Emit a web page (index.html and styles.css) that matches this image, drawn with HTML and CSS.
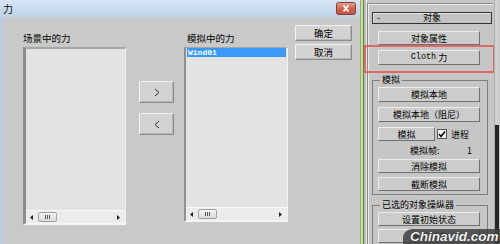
FILE: index.html
```html
<!DOCTYPE html>
<html>
<head>
<meta charset="utf-8">
<link rel="stylesheet" href="styles.css">
</head>
<body>
<div class="screen">
  <div class="dialog">
    <div class="titlebar">
      <span class="title">力</span>
      <svg class="close" width="20" height="13" viewBox="0 0 20 13">
        <defs><linearGradient id="cg" x1="0" y1="0" x2="0" y2="1"><stop offset="0" stop-color="#e9a597"/><stop offset="0.5" stop-color="#d2614f"/><stop offset="1" stop-color="#c6503c"/></linearGradient></defs>
        <rect x="0.5" y="0.5" width="19" height="12" rx="2" fill="url(#cg)" stroke="#8d3b30"/>
        <path d="M7.5 3.5 L12.5 9.5 M12.5 3.5 L7.5 9.5" stroke="#fff" stroke-width="1.8"/>
      </svg>
    </div>
    <div class="dbody">
      <div class="col col-left">
        <div class="label">场景中的力</div>
        <div class="list list-a">
          <div class="items"></div>
          <div class="hscroll">
            <svg class="arr" width="3" height="5" viewBox="0 0 3 5"><path d="M3 0 L0 2.5 L3 5Z" fill="#222"/></svg>
            <div class="thumb"><span></span><span></span><span></span></div>
            <div class="fill"></div>
            <svg class="arr" width="3" height="5" viewBox="0 0 3 5"><path d="M0 0 L3 2.5 L0 5Z" fill="#222"/></svg>
          </div>
        </div>
      </div>
      <div class="col col-mid">
        <button class="btn mv"><svg width="6" height="9" viewBox="0 0 6 9"><path d="M1 1 L5 4.5 L1 8" fill="none" stroke="#333" stroke-width="1"/></svg></button>
        <button class="btn mv"><svg width="6" height="9" viewBox="0 0 6 9"><path d="M5 1 L1 4.5 L5 8" fill="none" stroke="#333" stroke-width="1"/></svg></button>
      </div>
      <div class="col col-right">
        <div class="label lbl-r">模拟中的力</div>
        <div class="list list-b">
          <div class="items">
            <div class="item sel">Wind01</div>
          </div>
          <div class="hscroll">
            <svg class="arr" width="3" height="5" viewBox="0 0 3 5"><path d="M3 0 L0 2.5 L3 5Z" fill="#222"/></svg>
            <div class="thumb"><span></span><span></span><span></span></div>
            <div class="fill"></div>
            <svg class="arr" width="3" height="5" viewBox="0 0 3 5"><path d="M0 0 L3 2.5 L0 5Z" fill="#222"/></svg>
          </div>
        </div>
      </div>
      <div class="col col-btns">
        <button class="btn db">确定</button>
        <button class="btn db">取消</button>
      </div>
    </div>
  </div>
  <div class="sep"></div>
  <div class="panel">
    <div class="pcontent">
      <div class="rollout">
        <div class="rhead"><span class="minus">-</span><span class="rtitle">对象</span><span></span></div>
        <button class="pbtn first">对象属性</button>
        <div class="hilite">
          <button class="pbtn"><span class="mono">Cloth</span>&nbsp;力</button>
        </div>
        <fieldset class="grp g1">
          <legend>模拟</legend>
          <button class="pbtn">模拟本地</button>
          <button class="pbtn">模拟本地（阻尼）</button>
          <div class="simrow">
            <button class="pbtn half">模拟</button>
            <svg class="chk" width="10" height="10" viewBox="0 0 10 10"><rect x="0.5" y="0.5" width="9" height="9" fill="#f2f2f2" stroke="#555"/><path d="M2 5 L4 7.5 L8 2.5" fill="none" stroke="#000" stroke-width="1.5"/></svg>
            <span class="ptxt">进程</span>
          </div>
          <div class="framerow"><span>模拟帧:</span><span>1</span></div>
          <button class="pbtn s14">消除模拟</button>
          <button class="pbtn s14">截断模拟</button>
        </fieldset>
        <fieldset class="grp g2">
          <legend>已选的对象操纵器</legend>
          <button class="pbtn s14">设置初始状态</button>
          <button class="pbtn s14">重设状态</button>
        </fieldset>
      </div>
    </div>
    <div class="ptrack"><div class="pthumb"></div></div>
  </div>
  <div class="wm">Chinavid.com</div>
</div>
</body>
</html>
```
FILE: styles.css
```css
html, body {
  margin: 0;
  padding: 0;
}
body {
  width: 500px;
  height: 244px;
  overflow: hidden;
  font-family: "Noto Sans CJK SC", "Noto Sans", sans-serif;
  color: #000;
}
.screen {
  position: relative;
  display: flex;
  width: 500px;
  height: 244px;
  overflow: hidden;
  background: #c6c6c6;
}
.dialog {
  width: 361px;
  flex: none;
  display: flex;
  flex-direction: column;
  background: #c9c9c9;
  border-right: 1px solid #86a6c4;
  box-sizing: border-box;
}
.titlebar {
  height: 17px;
  flex: none;
  display: flex;
  align-items: center;
  padding-left: 3px;
  background: linear-gradient(#d6e5f4, #bcd3ea);
}
.title {
  font-size: 10px;
  line-height: 12px;
  color: #0d0d0d;
}
.close {
  display: block;
  margin-left: auto;
  margin-right: 4px;
}
.dbody {
  flex: 1;
  display: flex;
  border-left: 3px solid #b9cde3;
  padding-left: 20px;
}
.col {
  display: flex;
  flex-direction: column;
}
.col-left {
  width: 103px;
  padding-top: 15px;
}
.label {
  font-size: 9.5px;
  line-height: 13px;
  height: 13px;
  white-space: nowrap;
}
.lbl-r {
  padding-left: 3px;
}
.list {
  margin-top: 2px;
  display: flex;
  flex-direction: column;
  background: #e3e3e3;
  box-sizing: border-box;
}
.list-a {
  height: 178px;
  border-top: 2px solid #a6a6a6;
  border-left: 3px solid #8c8c8c;
  border-right: 1px solid #f2f2f2;
  border-bottom: 2px solid #f6f6f6;
}
.list-b {
  height: 175px;
  border-top: 1px solid #a6a6a6;
  border-left: 2px solid #909090;
  border-right: 1px solid #f2f2f2;
  border-bottom: 2px solid #f6f6f6;
}
.items {
  flex: 1;
}
.item {
  height: 9px;
  line-height: 9px;
  font-family: "Liberation Mono", monospace;
  font-size: 8px;
  font-weight: bold;
  padding-left: 1px;
}
.sel {
  background: #3b9af7;
  color: #fff;
  margin: 0 1px;
}
.hscroll {
  height: 12px;
  display: flex;
  align-items: center;
  background: #ececec;
  border-top: 1px solid #fafafa;
  padding: 0 5px 0 4px;
}
.arr {
  display: block;
  flex: none;
}
.thumb {
  width: 19px;
  height: 10px;
  margin-left: 5px;
  box-sizing: border-box;
  border: 1px solid #a2a2a2;
  border-radius: 2px;
  background: linear-gradient(#f6f6f6, #d9d9d9);
  display: flex;
  justify-content: center;
  align-items: center;
  gap: 1px;
}
.thumb span {
  width: 1px;
  height: 4px;
  background: #555;
}
.fill {
  flex: 1;
}
.col-mid {
  width: 35px;
  margin-left: 13px;
  padding-top: 64px;
  gap: 10px;
}
.col-right {
  width: 104px;
  margin-left: 10px;
  padding-top: 15px;
}
.col-btns {
  width: 57px;
  margin-left: 7px;
  padding-top: 8px;
  gap: 3px;
}
.btn {
  padding: 0;
  margin: 0;
  font-family: "Noto Sans CJK SC", sans-serif;
  font-size: 9.5px;
  color: #000;
  background: #d3d3d3;
  border: 1px solid;
  border-color: #f3f3f3 #8c8c8c #8c8c8c #f3f3f3;
  box-shadow: inset -1px -1px 0 #b6b6b6;
  display: flex;
  align-items: center;
  justify-content: center;
  box-sizing: border-box;
}
.mv {
  height: 22px;
}
.db {
  height: 16px;
}
.sep {
  width: 5px;
  flex: none;
  background: linear-gradient(to right, #dfe24c 0, #dfe24c 2px, #3f8583 2px, #3f8583 3px, #bdbdbd 3px);
}
.panel {
  width: 134px;
  flex: none;
  display: flex;
  background: #c6c6c6;
  border-left: 1px solid #e4e4e4;
  box-sizing: border-box;
}
.pcontent {
  width: 126px;
  flex: none;
  padding-top: 3px;
}
.rollout {
  height: 100%;
  box-sizing: border-box;
  border-top: 1px solid #8a8a8a;
  border-left: 1px solid #8a8a8a;
  box-shadow: inset 1px 1px 0 #ebebeb;
  padding: 8px 0 0 4px;
  display: flex;
  flex-direction: column;
}
.rhead {
  width: 120px;
  height: 12px;
  box-sizing: border-box;
  border: 1px solid #333;
  box-shadow: inset 1px 1px 0 #e6e6e6;
  background: #c3c3c3;
  display: grid;
  grid-template-columns: 1fr auto 1fr;
  align-items: center;
  font-size: 9px;
  line-height: 10px;
}
.minus {
  padding-left: 4px;
}
.pbtn {
  width: 102px;
  height: 15px;
  padding: 0;
  margin: 0;
  flex: none;
  font-family: "Noto Sans CJK SC", sans-serif;
  font-size: 9px;
  line-height: 11px;
  color: #000;
  background: #cccccc;
  border: 1px solid;
  border-color: #ececec #6f6f6f #6f6f6f #ececec;
  box-sizing: border-box;
  display: flex;
  align-items: center;
  justify-content: center;
}
.first {
  margin: 7px 0 0 6px;
  height: 14px;
}
.mono {
  font-family: "Liberation Mono", monospace;
  font-size: 8.5px;
}
.hilite {
  width: 131px;
  margin-left: -8px;
  box-sizing: border-box;
  border: 2px solid #e26868;
  padding: 3px 0 6px 12px;
}
.grp {
  margin: 2px 0 0 0;
  width: 116px;
  box-sizing: border-box;
  border: 1px solid #7e7e7e;
  padding: 2px 6px 3px 5px;
  display: flex;
  flex-direction: column;
  min-width: 0;
}
.grp legend {
  font-size: 9px;
  line-height: 10px;
  padding: 0 2px;
  margin-left: 2px;
}
.g1 {
  gap: 5px;
}
.g1 .framerow {
  margin-top: -1px;
}
.g1 .s14 {
  height: 14px;
}
.g1 .framerow + .s14 {
  margin-top: -2px;
}
.g1 .s14 + .s14 {
  margin-top: -1px;
}
.simrow {
  display: flex;
  align-items: center;
  height: 14px;
}
.half {
  width: 57px;
  height: 14px;
}
.chk {
  display: block;
  margin-left: 2px;
}
.ptxt {
  font-size: 9px;
  margin-left: 4px;
}
.framerow {
  height: 11px;
  display: flex;
  justify-content: space-between;
  font-size: 9px;
  line-height: 11px;
  padding: 0 9px 0 32px;
}
.g2 {
  margin-top: 5px;
  gap: 3px;
  border-bottom: none;
}
.g2 .s14 {
  height: 14px;
}
.ptrack {
  width: 4px;
  margin-left: 1px;
  background: #d2d2d2;
  border-left: 1px solid #ababab;
  display: flex;
  flex-direction: column;
}
.pthumb {
  margin-top: 125px;
  flex: 1;
  background: #262626;
}
.wm {
  position: absolute;
  left: 403px;
  top: 229px;
  width: 97px;
  height: 22px;
  box-sizing: border-box;
  border-radius: 9px 0 0 9px;
  background: rgba(62, 62, 62, 0.85);
  padding-left: 7px;
  font-family: "Liberation Sans", sans-serif;
  font-style: italic;
  font-weight: bold;
  font-size: 13.5px;
  line-height: 15px;
  color: #f4f4f4;
  white-space: nowrap;
  text-shadow: 0 0 1px #000;
}
```
